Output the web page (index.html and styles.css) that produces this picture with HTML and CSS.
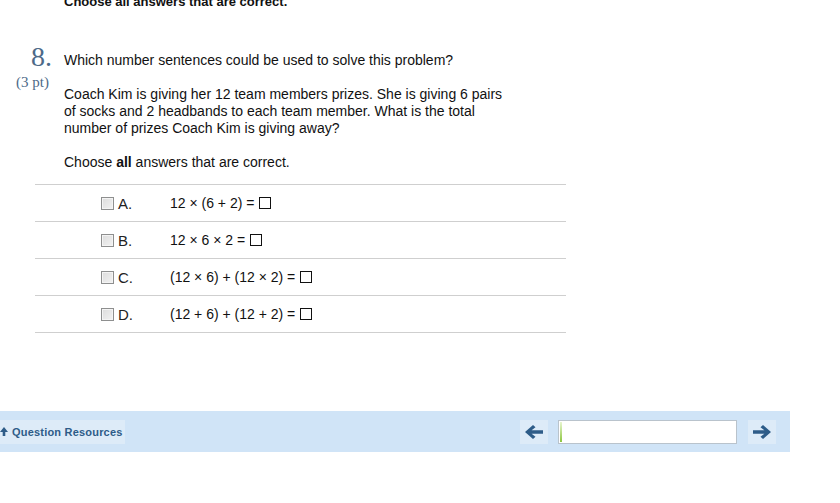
FILE: index.html
```html
<!DOCTYPE html>
<html>
<head>
<meta charset="utf-8">
<link rel="stylesheet" href="styles.css">
</head>
<body>
<div class="page">
  <div class="prev-tail">Choose all answers that are correct.</div>
  <div class="question">
    <div class="qnum">
      <div class="num">8.</div>
      <div class="pts">(3 pt)</div>
    </div>
    <div class="qbody">
      <p class="stem">Which number sentences could be used to solve this problem?</p>
      <p class="problem">Coach Kim is giving her 12 team members prizes. She is giving 6 pairs of socks and 2 headbands to each team member. What is the total number of prizes Coach Kim is giving away?</p>
      <p class="instr">Choose <b>all</b> answers that are correct.</p>
    </div>
  </div>
  <div class="answers">
    <div class="row"><span class="cb"></span><span class="letter">A.</span><span class="expr">12 × (6 + 2) = <span class="box"></span></span></div>
    <div class="row"><span class="cb"></span><span class="letter">B.</span><span class="expr">12 × 6 × 2 = <span class="box"></span></span></div>
    <div class="row"><span class="cb"></span><span class="letter">C.</span><span class="expr">(12 × 6) + (12 × 2) = <span class="box"></span></span></div>
    <div class="row"><span class="cb"></span><span class="letter">D.</span><span class="expr">(12 + 6) + (12 + 2) = <span class="box"></span></span></div>
  </div>
</div>
<div class="bar">
  <div class="res">
    <svg class="up" width="8" height="9" viewBox="0 0 8 9"><path d="M4 0 L8 5 L5.3 5 L5.3 9 L2.7 9 L2.7 5 L0 5 Z" fill="#2e5c88"/></svg>
    <span>Question Resources</span>
  </div>
  <div class="nav">
    <div class="navbtn">
      <svg width="20" height="16" viewBox="0 0 20 16"><path d="M1 8 L9 1 L11.5 3.3 L7.6 6.3 L19 6.3 L19 9.7 L7.6 9.7 L11.5 12.7 L9 15 Z" fill="#2e5c88"/></svg>
    </div>
    <div class="progress"><span class="fill"></span></div>
    <div class="navbtn">
      <svg width="20" height="16" viewBox="0 0 20 16"><path d="M19 8 L11 1 L8.5 3.3 L12.4 6.3 L1 6.3 L1 9.7 L12.4 9.7 L8.5 12.7 L11 15 Z" fill="#2e5c88"/></svg>
    </div>
  </div>
</div>
</body>
</html>
```
FILE: styles.css
```css
html, body {
  margin: 0;
  padding: 0;
  background: #fff;
  overflow: hidden;
}
body {
  width: 840px;
  height: 503px;
  font-family: "Liberation Sans", Arial, sans-serif;
  color: #111;
}
.page {
  height: 411px;
  display: flex;
  flex-direction: column;
}
.prev-tail {
  margin: -6px 0 0 64px;
  font-size: 13px;
  font-weight: bold;
  line-height: 15px;
  color: #111;
}
.question {
  display: flex;
  margin-top: 43px;
}
.qnum {
  width: 64px;
  flex: none;
  font-family: "Liberation Serif", "Times New Roman", serif;
  color: #4d6a88;
}
.num {
  font-size: 28px;
  line-height: 26px;
  padding-left: 31px;
  margin-top: -8px;
}
.pts {
  font-size: 15px;
  line-height: 18px;
  padding-left: 16px;
  margin-top: 3px;
}
.qbody {
  width: 450px;
  font-size: 14px;
  line-height: 17px;
}
.qbody p {
  margin: 0;
}
.stem {
  margin-top: 0 !important;
}
.problem {
  margin-top: 17px !important;
}
.instr {
  margin-top: 17px !important;
}
.answers {
  margin: 13px 0 0 35px;
  width: 531px;
  border-top: 1px solid #cfcfcf;
}
.row {
  display: flex;
  align-items: center;
  height: 36px;
  border-bottom: 1px solid #cfcfcf;
  font-size: 14px;
}
.cb {
  width: 11px;
  height: 11px;
  margin-left: 66px;
  border: 1px solid #8e8f8f;
  background: linear-gradient(135deg, #dcdcdc, #f2f2f2);
  box-shadow: inset 0 0 0 1px #f4f4f4;
}
.letter {
  margin-left: 4px;
  width: 52px;
  font-size: 15px;
  color: #222;
}
.expr {
  display: flex;
  align-items: center;
  white-space: pre;
  color: #111;
}
.box {
  display: inline-block;
  width: 10px;
  height: 10px;
  border: 1px solid #111;
  margin-left: 1px;
}
.bar {
  width: 790px;
  height: 41px;
  background: #d0e4f7;
  display: flex;
  align-items: center;
  justify-content: space-between;
}
.res {
  display: flex;
  align-items: center;
  height: 24px;
  width: 125px;
  background: #ddebf8;
  font-size: 11px;
  font-weight: bold;
  color: #2e5c88;
  white-space: nowrap;
  letter-spacing: 0.2px;
}
.up {
  margin-left: 0;
  margin-right: 4px;
}
.nav {
  display: flex;
  align-items: center;
  margin-right: 14px;
}
.navbtn {
  width: 28px;
  height: 24px;
  background: #ddebf8;
  display: flex;
  align-items: center;
  justify-content: center;
}
.progress {
  width: 177px;
  height: 22px;
  margin: 0 11px 0 10px;
  border: 1px solid #b9c3cc;
  background: #fff;
  position: relative;
}
.fill {
  position: absolute;
  left: 1px;
  top: 1px;
  bottom: 1px;
  width: 2px;
  background: linear-gradient(#e8f5d0, #8cc63f);
}
```
